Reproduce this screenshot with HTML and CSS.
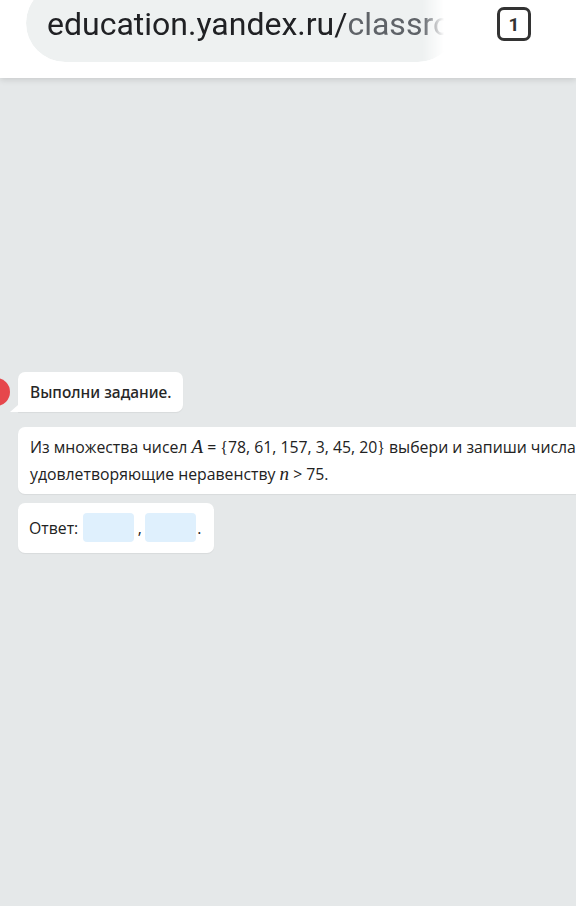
FILE: index.html
```html
<!DOCTYPE html>
<html lang="ru">
<head>
    <meta charset="UTF-8">
    <meta name="viewport" content="width=device-width, initial-scale=1.0">
    <title>Яндекс.Учебник</title>
    <link rel="stylesheet" href="styles.css">
</head>
<body>
    <!-- browser toolbar -->
    <header class="toolbar">
        <div class="url-pill">
            <span class="url-host">education.yandex.ru/</span><span class="url-path">classroom</span>
        </div>
        <div class="tabs-count">1</div>
    </header>

    <main class="chat">
        <div class="chat-row">
            <div class="avatar"></div>
            <div class="bubble bubble-first">Выполни задание.</div>
        </div>

        <div class="bubble bubble-wide">
            Из множества чисел <span class="math-var">A</span> = <span class="brace">{</span>78, 61, 157, 3, 45, 20<span class="brace">}</span> выбери и запиши числа,<br>
            удовлетворяющие неравенству <span class="math-var">n</span> &gt; 75.
        </div>

        <div class="bubble bubble-answer">
            <span class="answer-label">Ответ:</span>
            <input class="answer-input" type="text">
            <span class="comma">,</span>
            <input class="answer-input" type="text">
            <span class="dot">.</span>
        </div>
    </main>
</body>
</html>
```

FILE: styles.css
```css
body {
    margin: 0;
    background: #e5e8e9;
    font-family: "Open Sans", "Noto Sans", sans-serif;
    color: #222;
    overflow: hidden;
    height: 906px;
}

.toolbar {
    height: 78px;
    background: #fff;
    display: flex;
    align-items: flex-start;
    box-shadow: 0 2px 6px rgba(0,0,0,0.12);
    position: relative;
}
.url-pill {
    margin-left: 26px;
    margin-top: -16px;
    width: 431px;
    height: 78px;
    box-sizing: border-box;
    padding: 21px 0 0 21px;
    border-radius: 39px;
    background: #eef1f1;
    font-family: Roboto, sans-serif;
    font-size: 32px;
    white-space: nowrap;
    overflow: hidden;
    -webkit-mask-image: linear-gradient(to right, #000 92%, transparent 97%);
}
.url-host {
    color: #202124;
}
.url-path {
    color: #5f6368;
}
.tabs-count {
    margin: 7px 0 0 40px;
    width: 34px;
    height: 34px;
    box-sizing: border-box;
    border: 3px solid #333;
    border-radius: 7px;
    display: flex;
    align-items: center;
    justify-content: center;
    font-family: Roboto, sans-serif;
    font-weight: 700;
    font-size: 19px;
    color: #333;
}

.chat {
    padding-top: 294px;
    display: flex;
    flex-direction: column;
    align-items: flex-start;
}
.chat-row {
    display: flex;
    align-items: center;
    margin-left: -18px;
    gap: 8px;
}
.avatar {
    width: 28px;
    height: 28px;
    border-radius: 50%;
    background: #e6474c;
}
.bubble {
    background: #fff;
    border-radius: 7px;
    font-size: 15.8px;
    line-height: 26px;
    box-shadow: 0 1px 1px rgba(0,0,0,0.06);
    white-space: nowrap;
}
.bubble-first {
    position: relative;
    padding: 7px 12px;
    font-family: "Noto Sans", "Open Sans", sans-serif;
    font-size: 15.5px;
    font-weight: 500;
    color: #262626;
    border-bottom-left-radius: 0;
}
/* little tail at the bottom-left corner */
.bubble-first::before {
    content: "";
    position: absolute;
    left: -8px;
    bottom: 0;
    border-bottom: 7px solid #fff;
    border-left: 8px solid transparent;
}
.bubble-wide {
    margin: 15px 0 0 18px;
    padding: 7px 12px;
    width: 600px;
}
.bubble-answer {
    margin: 9px 0 0 18px;
    padding: 10px 13px 11px 11px;
    display: flex;
    align-items: center;
}
.answer-label {
    margin-right: 5px;
}
.answer-input {
    width: 51px;
    height: 29px;
    box-sizing: border-box;
    border: none;
    border-radius: 4px;
    background: #dff0fd;
    margin: 0;
}
.comma {
    width: 11px;
    text-align: center;
}
.dot {
    margin-left: 1px;
}
.math-var {
    font-family: "Liberation Serif", "DejaVu Serif", serif;
    font-style: italic;
    font-size: 19px;
}
.brace {
    font-family: "Liberation Serif", "DejaVu Serif", serif;
}
```
